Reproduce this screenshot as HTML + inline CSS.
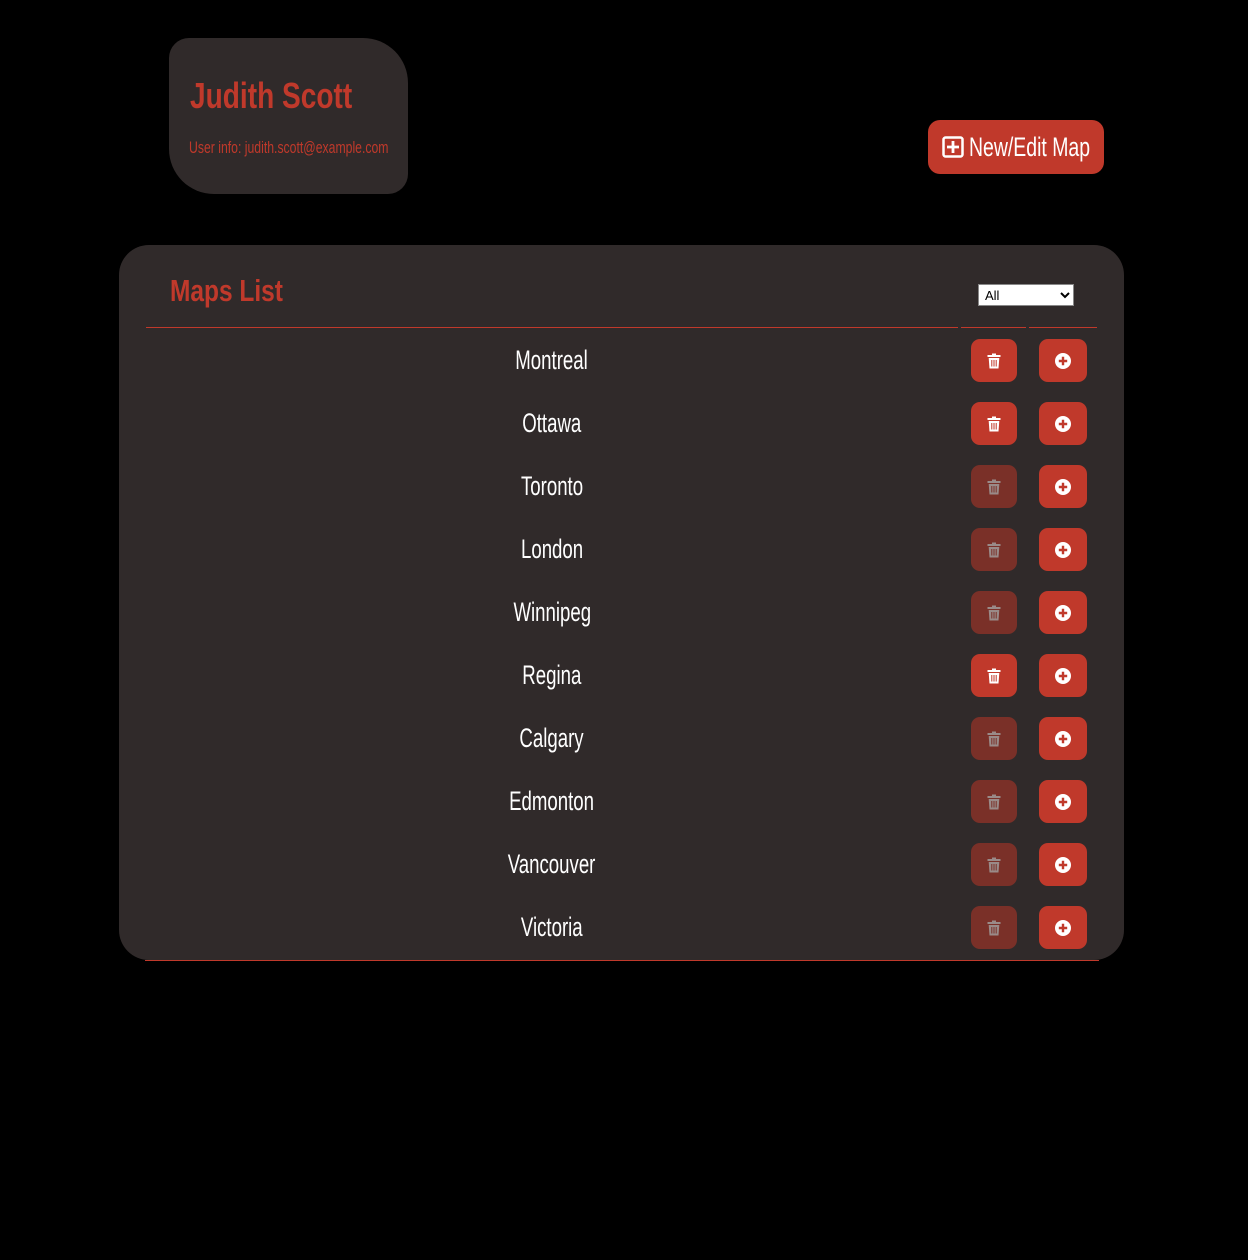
<!DOCTYPE html>
<html><head><style>
body{margin:0;background:#000;width:1248px;height:1260px;position:relative;overflow:hidden;font-family:"Liberation Sans",sans-serif}
.card{position:absolute;left:169px;top:38px;width:239px;height:156px;background:#302a2a;border-radius:20px 45px 20px 45px}
.card h1{position:absolute;left:21px;top:40px;margin:0;color:#c0392b;font-size:36px;font-weight:bold;white-space:nowrap;line-height:1;transform:scaleX(.78);transform-origin:left}
.card p{position:absolute;left:20px;top:100px;margin:0;color:#c0392b;font-size:17px;white-space:nowrap;transform:scaleX(.72);transform-origin:left}
.btn{position:absolute;left:928px;top:120px;width:176px;height:54px;background:#c0392b;border-radius:12px;color:#fff;font-size:27px;line-height:54px;white-space:nowrap}
.btn svg{position:absolute;left:14px;top:16px}
.btn span{position:absolute;left:41px;top:0;transform:scaleX(.72);transform-origin:left}
.panel{position:absolute;left:119px;top:245px;width:1005px;height:715px;background:#302a2a;border-radius:30px}
.title{position:absolute;left:170px;top:275px;color:#c0392b;font-size:31px;font-weight:bold;white-space:nowrap;line-height:1;transform:scaleX(.79);transform-origin:left}
select{position:absolute;left:978px;top:284px;width:96px;height:22px;font-size:13px;background:#fff;border:1px solid #888;padding:0 2px}
.ln{position:absolute;height:1px;background:#c0392b}
.row{position:absolute;left:146px;width:952px;height:63px}
.row .n{position:absolute;left:0;width:812px;text-align:center;top:14px;color:#fff;font-size:27px;line-height:34px}
.row .n span{display:inline-block;transform:scaleX(.69)}
.b{position:absolute;top:10px;height:43px;border-radius:9px;background:#c0392b}
.b svg{position:absolute;left:50%;top:50%;transform:translate(-50%,-50%)}
.d{left:825px;width:46px}
.a{left:893px;width:48px}
.dis{background:#7a3028}
</style></head><body>
<div class="card"><h1>Judith Scott</h1><p>User info: judith.scott@example.com</p></div>
<div class="btn"><svg width="22" height="22" viewBox="0 0 22 22"><rect x="1.5" y="1.5" width="19" height="19" rx="2" fill="none" stroke="#fff" stroke-width="2.5"/><path d="M11 5v12M5 11h12" stroke="#fff" stroke-width="2.8"/></svg><span>New/Edit Map</span></div>
<div class="panel"></div>
<div class="title">Maps List</div>
<select><option>All</option></select>
<div class="ln" style="left:146px;top:327px;width:812px"></div>
<div class="ln" style="left:961px;top:327px;width:65px"></div>
<div class="ln" style="left:1029px;top:327px;width:68px"></div>
<div class="ln" style="left:145px;top:960px;width:954px"></div>
<div id="rows"></div>
<script>
var names=["Montreal","Ottawa","Toronto","London","Winnipeg","Regina","Calgary","Edmonton","Vancouver","Victoria"];
var en=[1,1,0,0,0,1,0,0,0,0];
var h="";
names.forEach(function(n,i){
var c=en[i]?"#fff":"#9a8a88";
h+='<div class="row" style="top:'+(329+i*63)+'px"><div class="n"><span>'+n+'</span></div>'+
'<div class="b d'+(en[i]?'':' dis')+'"><svg width="13" height="15" viewBox="0 0 13 15"><rect x="0" y="1.5" width="13" height="2" fill="'+c+'"/><rect x="4.5" y="0" width="4" height="2" fill="'+c+'"/><path d="M1.2 4.5h10.6l-.8 10.5H2z" fill="'+c+'"/><path d="M4.3 6.5v6.5M6.5 6.5v6.5M8.7 6.5v6.5" stroke="'+(en[i]?'#c0392b':'#7a3028')+'" stroke-width="1"/></svg></div>'+
'<div class="b a"><svg width="16" height="16" viewBox="0 0 16 16"><circle cx="8" cy="8" r="8" fill="#fff"/><path d="M8 3.8v8.4M3.8 8h8.4" stroke="#c0392b" stroke-width="2.4"/></svg></div></div>';
});
document.getElementById("rows").innerHTML=h;
</script>
</body></html>
